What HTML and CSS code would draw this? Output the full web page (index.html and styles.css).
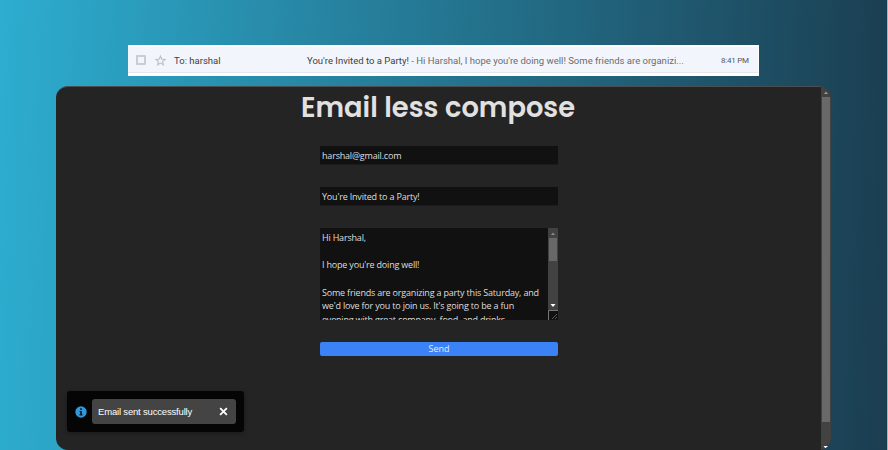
FILE: index.html
```html
<!DOCTYPE html>
<html lang="en">
<head>
<meta charset="utf-8">
<title>Email less compose</title>
<link rel="stylesheet" href="styles.css">
</head>
<body>
<div class="page">
  <div class="mail-row">
    <span class="checkbox"></span>
    <svg class="star" viewBox="0 0 24 24"><path d="M12 2.500l2.800 6.600 7.200.6-5.500 4.700 1.700 7L12 17.700l-6.200 3.700 1.700-7L2 9.700l7.200-.6z" fill="none" stroke="#bfc1c6" stroke-width="2.600"/></svg>
    <span class="recipient">To: harshal</span>
    <span class="subject">You're Invited to a Party!<span class="snippet"> - Hi Harshal, I hope you're doing well! Some friends are organizi...</span></span>
    <span class="time">8:41 PM</span>
  </div>
  <main class="window">
    <section class="content">
      <h1>Email less compose</h1>
      <form class="form">
        <div class="field">harshal@gmail.com</div>
        <div class="field">You're Invited to a Party!</div>
        <div class="message">
          <div class="text">
            <p>Hi Harshal,</p>
            <p>I hope you're doing well!</p>
            <p>Some friends are organizing a party this Saturday, and<br>we'd love for you to join us. It's going to be a fun<br>evening with great company, food, and drinks.</p>
          </div>
          <div class="rail">
            <div class="track">
              <svg class="arrow" viewBox="0 0 8 5"><path d="M2 4l2-2.500 2 2.500z" fill="#8d8d8d"/></svg>
              <div class="thumb"></div>
              <svg class="arrow down" viewBox="0 0 8 5"><path d="M1.500 1h5L4 4z" fill="#fff"/></svg>
            </div>
            <svg class="grip" viewBox="0 0 10 10"><path d="M0.500 10V0.500H10" fill="none" stroke="#777"/><path d="M4 9l5-5M7 9l2-2" fill="none" stroke="#777" stroke-width=".7"/></svg>
          </div>
        </div>
        <button class="send" type="button">Send</button>
      </form>
      <div class="toast">
        <svg class="info" viewBox="0 0 12 12"><circle cx="6" cy="6" r="5.700" fill="#3298dc"/><path d="M5.100 2.300h1.800v1.600H5.100zM4.500 4.900h2.400v3.400h.7v1.100H4.400V8.300h.7V6h-.6z" fill="#0a2233"/></svg>
        <div class="toast-body"><span>Email sent successfully</span><svg class="close" viewBox="0 0 8 8"><path d="M1 1l6 6M7 1L1 7" stroke="#fff" stroke-width="1.600"/></svg></div>
      </div>
    </section>
    <div class="scrollbar">
      <svg class="arrow" viewBox="0 0 8 5"><path d="M2 4l2-2.500 2 2.500z" fill="#999"/></svg>
      <div class="window-thumb"></div>
      <svg class="arrow bottom" viewBox="0 0 8 5"><path d="M1.500 1h5L4 4z" fill="#fff"/></svg>
    </div>
  </main>
</div>
</body>
</html>
```

FILE: styles.css
```css
* { box-sizing: border-box; }
body { margin: 0; font-family: "Open Sans", "Noto Sans", sans-serif; }
p, h1 { margin: 0; }
.page {
  height: 450px;
  padding: 45px 56px 0 56px;
  overflow: hidden;
  border-right: 1px solid #9fb6c0;
  background: linear-gradient(92deg, #2dadd0, #1b3d50);
}
.mail-row {
  display: flex;
  align-items: center;
  width: 631px;
  height: 31px;
  margin-left: 72px;
  padding-left: 8px;
  border: solid #fff;
  border-width: 2px 1px 3px 0;
  background: #f2f5fc;
  box-shadow: inset 0 -1px #e3e6ed;
  font-family: Roboto, sans-serif;
  font-size: 9.520px;
  color: #3f4043;
  white-space: nowrap;
}
.checkbox { width: 10px; height: 10px; border: 2px solid #cacccf; border-radius: 1px; }
.star { width: 11px; height: 11px; margin-left: 9px; }
.recipient { width: 133px; margin-left: 8px; }
.subject { width: 414px; }
.snippet { color: #6a6c70; }
.time { font-size: 8px; letter-spacing: -.25px; color: #55575b; }
.window {
  display: flex;
  width: 775px;
  height: 364px;
  margin-top: 10px;
  border-top: 1px solid #4b4d4e;
  border-radius: 12px;
  overflow: hidden;
  background: #242424;
}
.content { flex: 1; }
h1 {
  height: 43px;
  padding-right: 1px;
  font: 600 27.300px/41px Poppins, "Open Sans", sans-serif;
  text-align: center;
  color: #e1e1e1;
}
.form { width: 238px; margin: 16px 0 0 264px; color: #dfdfdf; font-size: 9px; letter-spacing: -.19px; }
.field {
  height: 19px;
  margin-bottom: 22px;
  padding-left: 2px;
  border-bottom: 1px solid #1b1b1b;
  background: #111;
  line-height: 20px;
}
.message { display: flex; height: 92px; background: #111; overflow: hidden; }
.text { width: 228px; padding: 3px 0 0 2px; line-height: 13.700px; white-space: nowrap; }
.text p { margin-bottom: 13.700px; }
.rail { width: 10px; }
.track { display: flex; flex-direction: column; width: 10px; height: 82px; background: #424242; }
.arrow { display: block; width: 8px; height: 5px; margin: 3px auto 2px; flex: none; }
.thumb { width: 8px; height: 23px; margin: 0 1px; background: #686868; }
.down { margin-top: auto; }
.grip { display: block; width: 10px; height: 10px; }
.send {
  display: block;
  width: 100%;
  height: 14px;
  margin-top: 22px;
  padding: 0;
  border: 0;
  border-radius: 2px;
  background: #3b82f6;
  color: #e5edfb;
  font: 9px/14px "Open Sans", sans-serif;
}
.toast {
  display: flex;
  align-items: center;
  width: 177px;
  height: 41px;
  margin: 35px 0 0 11px;
  padding-left: 8px;
  border-radius: 3px;
  background: #050505;
  box-shadow: 0 1px 5px #0005;
}
.info { width: 12px; height: 12px; }
.toast-body {
  display: flex;
  align-items: center;
  justify-content: space-between;
  width: 144px;
  height: 25px;
  margin-left: 5px;
  padding: 0 8px 1px 6px;
  border-radius: 3px;
  background: #444;
  color: #fff;
  font: 9.500px "Liberation Sans", sans-serif;
  letter-spacing: -.18px;
}
.close { width: 9px; height: 9px; margin-top: 1px; }
.scrollbar { display: flex; flex-direction: column; width: 10px; background: #424242; }
.window-thumb { width: 8px; height: 325px; margin: 0 1px; background: #696969; }
.bottom { margin: auto auto 0; }
```
